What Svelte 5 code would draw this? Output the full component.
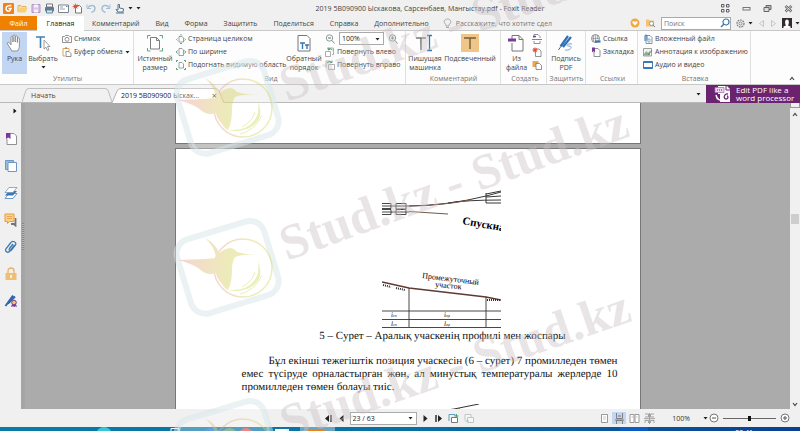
<script>
	const icons = {
		app: [11, 11, '<rect width="11" height="11" rx="1" fill="#f08019"/><path d="M8.5 2.5C5 2 3 3.500 3 5.500s1.500 3 3.500 2.500L8 5.500H5.500" fill="none" stroke="#fff" stroke-width="1.500"/>'],
		open: [11, 11, '<path d="M1 9V2.500h3l1 1h4V5" fill="#f7dc9a" stroke="#e3b55a"/><path d="M1 9.500l2-4.500h7.500l-2 4.500z" fill="#f6cf78"/>'],
		save: [10, 11, '<path d="M1 1.500h8v8H1z" fill="#d9c4e4" stroke="#b393c4"/><path d="M3 1.500h4v3H3zM3 6.500h4v3H3z" fill="#f6eef9"/>'],
		print: [11, 11, '<path d="M2.500 1h6v3h-6z" fill="#fff" stroke="#6b7680"/><rect x="1" y="4" width="9" height="4.500" rx="1" fill="#6b7680"/><path d="M2.500 7h6v3h-6z" fill="#d5e6f2" stroke="#5e88a6"/>'],
		mail: [11, 11, '<path d="M.5 2h10v7.500H.5z" fill="#fff" stroke="#7c848b"/><path d="M2 4h3M2 6h5" stroke="#91a4b4"/><path d="M8 3.500h1.500" stroke="#5e88a6"/>'],
		create: [11, 11, '<path d="M3.500 2.500h4l2 2v5.500h-6z" fill="#fff" stroke="#777"/><circle cx="3.500" cy="3.500" r="2" fill="#e4553a"/><path d="M3.500.5v6M.5 3.500h6M1.500 1.500l4 4M5.500 1.500l-4 4" stroke="#e4553a" stroke-width=".7"/>'],
		undo: [11, 11, '<path d="M2 4.500C4 1.500 9 2 9 5.500 9 8 7 9 5.500 9.500" fill="none" stroke="#a5bed8" stroke-width="1.400"/><path d="M1 1.500v4h4" fill="none" stroke="#a5bed8"/>'],
		redo: [11, 11, '<path d="M9 4.500C7 1.500 2 2 2 5.500 2 8 4 9 5.500 9.500" fill="none" stroke="#a5bed8" stroke-width="1.400"/><path d="M10 1.500v4H6" fill="none" stroke="#a5bed8"/>'],
		touch: [11, 11, '<path d="M4 7V1.500h1.500V5l4 .8-.5 3.200H4L2 6.500z" fill="#f2f8fc" stroke="#53748f"/><path d="M2 10h8" stroke="#53748f"/>'],
		grid: [9, 9, '<path d="M.5.5h2.500v2.500H.5zM5.500.5H8v2.500H5.500zM.5 5.500h2.500V8H.5zM5.500 5.500H8V8H5.500z" fill="none" stroke="#5c5c66"/>'],
		min: [9, 9, '<rect x="1" y="3.500" width="7" height="2.500" fill="none" stroke="#777"/>'],
		restore: [9, 9, '<path d="M3 1.500h5v4H3z" fill="#bbb" stroke="#666"/><path d="M1 3.500h5v4H1z" fill="#ddd" stroke="#666"/>'],
		shut: [9, 9, '<path d="M1.500 2l6 5.500M7.500 2l-6 5.500" stroke="#666" stroke-width="2.400"/><path d="M1.500 2l6 5.500M7.500 2l-6 5.500" stroke="#eee" stroke-width=".9"/>'],
		bulb: [9, 11, '<path d="M3 8V6.500C-.5 4.500 1.500 1 4.500 1s5 3.500 1.500 5.500V8zM3 9.500h3" fill="none" stroke="#999" stroke-width=".8"/>'],
		heart: [10, 10, '<circle cx="5" cy="5" r="4.500" fill="#f3a83c"/><path d="M5 7.500L2.500 5C2 3 4 2.500 5 4c1-1.500 3-1 2.500 1z" fill="#fff"/>'],
		finder: [11, 10, '<path d="M1 8.500v-7h3l1 1h4v6z" fill="#f5c274"/><circle cx="6.500" cy="5.500" r="2" fill="#fff" stroke="#888" stroke-width=".8"/><path d="M8 7l2 2" stroke="#888"/>'],
		lens: [10, 10, '<circle cx="6" cy="4" r="3" fill="none" stroke="#3d78ae" stroke-width="1.200"/><path d="M4 6L1 9" stroke="#3d78ae" stroke-width="1.500"/>'],
		gear: [9, 9, '<circle cx="4.500" cy="4.500" r="3.500" fill="none" stroke="#777" stroke-dasharray="1.800 .8" stroke-width="1.200"/><circle cx="4.500" cy="4.500" r="1.500" fill="none" stroke="#777" stroke-width=".8"/>'],
		prev: [7, 9, '<path d="M5.500 1.500v6L1.500 4.500z" fill="none" stroke="#bbb" stroke-width=".8"/>'],
		next: [7, 9, '<path d="M1.500 1.500v6l4-3z" fill="none" stroke="#bbb" stroke-width=".8"/>'],
		user: [10, 10, '<rect width="10" height="10" fill="#332c2c"/><path d="M1.500 10V8.500L4 7.500C2.500 5 3 1.500 5 1.500S7.500 5 6 7.500l2.500 1V10z" fill="#fff"/>'],
		down: [5, 4, '<path d="M.5 1h4L2.500 3.500z" fill="#222"/>'],
		hand: [18, 18, '<path d="M6 17L1.500 10c-.8-1.500 1-2.500 2-1l1.500 2V3.500c0-1.800 2-1.800 2 0V8 2.200c0-1.600 2.200-1.600 2.200 0V8 3c0-1.600 2.200-1.600 2.200 0v5.500V5c0-1.500 2-1.500 2 0v7c0 2-1 3.500-2 5z" fill="#fff" stroke="#888" stroke-width=".9"/>'],
		pick: [18, 18, '<path d="M2 3h9M6.500 3v11" stroke="#3d7fb5" stroke-width="1.600"/><path d="M10 6v9l2-1.800 1.500 3.300 1.500-.7-1.500-3.300H16z" fill="#fff" stroke="#888" stroke-width=".8"/>'],
		actual: [18, 18, '<path d="M4.500 3.500h6l3 3v8.500h-9z" fill="#fff" stroke="#7d7d7d"/><path d="M10.500 3.500v3h3" fill="none" stroke="#7d7d7d"/><path d="M1.500 4.500v-3h3M13.500 1.500h3v3M16.500 14v3h-3M4.500 17h-3v-3" fill="none" stroke="#61a583"/>'],
		flow: [18, 18, '<path d="M3 1.500h9l3 3V17H3z" fill="#fff" stroke="#777"/><path d="M5 9h5M7.500 9v6M10 11h4M12 11v4" stroke="#3975ae" stroke-width="1.400"/>'],
		type: [18, 18, '<path d="M0 4h10M5 4v12" stroke="#777" stroke-width="1.600"/><path d="M13.500 2v14M11 1.500h5M11 16.500h5" stroke="#3678b2" stroke-width="1.300"/>'],
		mark: [18, 18, '<rect width="18" height="18" fill="#efc688"/><path d="M3 4h12M9 4V15" stroke="#745f3e" stroke-width="1.400"/>'],
		file: [18, 18, '<path d="M4 5V1.500h7l4 4V17H4V9" fill="#fff" stroke="#777"/><path d="M11 1.500v4h4" fill="none" stroke="#777"/><path d="M0 6h8" stroke="#7a3b98" stroke-width="3"/>'],
		sign: [18, 18, '<path d="M11 2L3.500 12.500M14 3L6 13" stroke="#2f70b6" stroke-width="2.200"/><path d="M1.500 16l2-3" stroke="#2f70b6"/><path d="M8 16c6 1 8-4 4-4s-1-3 3-2" fill="none" stroke="#71a5d5"/>'],
		camera: [10, 10, '<path d="M.5 2.500h2l1-1h3l1 1h2v6h-9z" fill="#fff" stroke="#777" stroke-width=".8"/><circle cx="5" cy="5.300" r="2" fill="none" stroke="#777" stroke-width=".8"/>'],
		paste: [10, 10, '<path d="M3 9H1V1.500h6V4" fill="none" stroke="#dfa75a"/><path d="M4 4.500h3l2 2V9.500H4z" fill="#fff" stroke="#777" stroke-width=".8"/><path d="M3 1h2" stroke="#777"/>'],
		whole: [10, 10, '<path d="M3 2.500h3l1.500 1.500v4H3z" fill="#fff" stroke="#888" stroke-width=".8"/><path d="M4 1.500L5 .5l1 1M4 9l1 1 1-1M1.500 4.500L.5 5.500l1 1M8.500 4.500l1 1-1 1" fill="none" stroke="#4aa077" stroke-width=".9"/>'],
		wide: [10, 10, '<path d="M3 1.500h3l1.500 1.500v5.500H3z" fill="#fff" stroke="#888" stroke-width=".8"/><path d="M1.500 3.500L.3 5l1.200 1.500M8.500 3.500L9.700 5 8.500 6.500" fill="none" stroke="#4aa077"/>'],
		visible: [10, 10, '<path d="M3 2.500h3l1.500 1.500v4H3z" fill="#fff" stroke="#888" stroke-width=".8"/><path d="M.5 2V.5H2M8 .5h1.500V2M9.500 8v1.500H8M2 9.500H.5V8" fill="none" stroke="#4aa077"/>'],
		zoomout: [10, 10, '<circle cx="4.500" cy="4" r="3.200" fill="none" stroke="#888" stroke-width=".9"/><path d="M3 4h3" stroke="#4aa077" stroke-width="1.200"/><path d="M7 6.500l2.500 3" stroke="#888"/>'],
		zoomin: [10, 10, '<circle cx="4.500" cy="4" r="3.200" fill="none" stroke="#888" stroke-width=".9"/><path d="M3 4h3M4.500 2.500v3" stroke="#4aa077" stroke-width="1.200"/><path d="M7 6.500l2.500 3" stroke="#888"/>'],
		left: [10, 10, '<path d="M3.500 3.500V1h5v6.500H7" fill="none" stroke="#999" stroke-width=".8"/><path d="M.5 4.500h5v5h-5z" fill="#fff" stroke="#999" stroke-width=".8"/><path d="M7.500 3L5 1.500 3 2.500M3 .5v2h2" fill="none" stroke="#4aa077"/>'],
		right: [10, 10, '<path d="M1 7.500V1h4v2" fill="none" stroke="#999" stroke-width=".8"/><path d="M3.500 4.500h6v5h-6z" fill="#fff" stroke="#999" stroke-width=".8"/><path d="M2 3l2.500-1.500L7 2.500M7 .5v2H5" fill="none" stroke="#4aa077"/>'],
		scan: [10, 10, '<path d="M2 4V.5h4l2 2V4M2 7v2.500h6V7" fill="none" stroke="#777" stroke-width=".8"/><path d="M0 5.500h10" stroke="#4f8fc4"/><path d="M1 2.500h3" stroke="#7a3b98" stroke-width="1.400"/>'],
		blank: [10, 10, '<path d="M3.500 2h3.500L9 4v5.500H3.500z" fill="#fff" stroke="#777" stroke-width=".8"/><circle cx="3" cy="3" r="1.800" fill="#e4553a"/><path d="M3 .3v5.400M.3 3h5.400M1 1l4 4M5 1L1 5" stroke="#e4553a" stroke-width=".7"/>'],
		clip: [10, 10, '<path d="M.5 1h6v6h-6z" fill="#e9a750"/><path d="M4 3.500h3.500l2 2v4H4z" fill="#fff" stroke="#777" stroke-width=".8"/>'],
		link: [10, 10, '<circle cx="4.500" cy="4.500" r="4" fill="#eee" stroke="#777" stroke-width=".8"/><path d="M.5 4.500h8M4.500.5v8M2.500 1v7M6.500 1v4" stroke="#888" stroke-width=".6"/><path d="M4 7.500h5.500" stroke="#3675b5" stroke-width="2.200"/>'],
		bookmark: [10, 10, '<path d="M3 1.500h4l2 2v6H3z" fill="#fff" stroke="#777" stroke-width=".8"/><path d="M1 .5h3v5L2.500 4 1 5.500z" fill="#7a3b98"/>'],
		attach: [10, 10, '<path d="M3 1.500h4l2 2v6H3z" fill="#fff" stroke="#777" stroke-width=".8"/><path d="M2 7V2c0-1.500 2-1.500 2 0v4.500" fill="none" stroke="#3678b2"/><path d="M5 5h2v3H5z" fill="none" stroke="#66a3d1" stroke-width=".8"/>'],
		picture: [10, 10, '<path d="M.5 1.500h8V9h-8z" fill="#eef5ef" stroke="#888" stroke-width=".8"/><path d="M1 7l2.500-3L5 6l2-2v4.500H1z" fill="#8aac90"/><path d="M5 8l4-5" stroke="#777"/>'],
		video: [10, 10, '<path d="M.5 1.500h9v7h-9z" fill="#fff" stroke="#3d79b4"/><path d="M.5 2.300h9M.5 7.700h9" stroke="#3d79b4" stroke-width="1.600"/>'],
		sideMark: [14, 14, '<path d="M4 1.500h6l2.500 2.500v8.500H3V7" fill="#fff" stroke="#777" stroke-width=".8"/><path d="M2 1h4.500v6L4.300 5.500 2 7z" fill="#7a3b98"/>'],
		sidePages: [14, 14, '<path d="M1.500 1.500h8v9h-8z" fill="#9dbcd9" stroke="#6d98c3"/><path d="M4 3.500h8.500v9H4z" fill="#fff" stroke="#6d98c3"/>'],
		sideLayers: [14, 14, '<path d="M5 7.500h8L9 12.500H1z" fill="#fff" stroke="#4e82b5" stroke-width=".8"/><path d="M5 5h8L9 9.500H1z" fill="#3779b5"/><path d="M5 1.500h8L9 6.500H1z" fill="#fff" stroke="#7397b8" stroke-width=".8"/>'],
		sideNotes: [14, 14, '<path d="M11.500 5v6H7M9 10.500l2.500 2V9" fill="none" stroke="#777" stroke-width="1.800"/><path d="M1 1h9v7.500H5.500l-2 2v-2H1z" fill="#fad08f" stroke="#eb9c3b"/><path d="M3 3.500h5M3 5.500h5" stroke="#eb9c3b" stroke-width=".8"/>'],
		sideClip: [14, 14, '<path d="M10.500 5L6 11c-2 2.500-5.500.5-4-2.200L6.500 3C8.500 0 13 2 11.500 5L7.500 10c-1.500 1.500-3 0-2-1.500L9 4" fill="none" stroke="#3c7ab5" stroke-width="1.300"/>'],
		sideLock: [14, 14, '<path d="M4 6V4c0-4 6-4 6 0v2" fill="none" stroke="#e9b163" stroke-width="1.300"/><path d="M1.500 6h11v7h-11z" fill="#f1bd73"/><path d="M7 8v3" stroke="#fff" stroke-width="1.600"/>'],
		sideSign: [14, 14, '<path d="M9 1.500L1.500 12M11 2.500L4 9.500" stroke="#2c69af" stroke-width="2"/><path d="M8.500 9l-1.500 4 2-.8 1.500.8 1-.8 1.500.8L11.500 9z" fill="#7a3b98"/><circle cx="10" cy="8.500" r="2.300" fill="#f3c36e" stroke="#7a3b98"/>'],
		first: [9, 9, '<path d="M5 1v7L1 4.500z" fill="#222"/><path d="M7 1v7" stroke="#222" stroke-width="1.400"/>'],
		back: [7, 9, '<path d="M5.500 1v7L1.500 4.500z" fill="#222"/>'],
		forward: [7, 9, '<path d="M1.500 1v7l4-3.500z" fill="#222"/>'],
		last: [9, 9, '<path d="M2 1v7" stroke="#222" stroke-width="1.400"/><path d="M4 1v7l4-3.500z" fill="#222"/>'],
		viewAdd: [11, 11, '<path d="M1 8V1.500h6V3" fill="none" stroke="#5f9fc1"/><path d="M3.500 4.500h6v5h-6z" fill="#fff" stroke="#777"/><path d="M8.500 1v4M6.500 3h4" stroke="#4aa077"/>'],
		viewBack: [11, 11, '<path d="M1 7V1.500h6V4M3.500 4.500h6v5h-6z" fill="#f6f6f6" stroke="#bcc6cc"/><path d="M1 8h4" stroke="#9fcfb6"/>'],
		single: [11, 11, '<path d="M2.500 1.500h6v8h-6z" fill="#fff" stroke="#999"/><path d="M4 4h3M4 6h3" stroke="#bbb" stroke-width=".8"/>'],
		scroll: [11, 11, '<path d="M2.500 0v5.500h6V0M2.500 11V7.500h6V11M1 7h9" fill="none" stroke="#777" stroke-width=".9"/><path d="M4 3h3" stroke="#777"/>'],
		facing: [11, 11, '<path d="M1 1.500h4v8H1zM6 1.500h4v8H6z" fill="#fff" stroke="#999"/><path d="M2.500 4H4M7 4h1.500" stroke="#bbb"/>'],
		facingScroll: [11, 11, '<path d="M1 1h3.500v3H1M10 1H6.500v3H10M1 10V7.500h3.500V10M10 10V7.500H6.500V10M0 5.700h11M5.500 0v11" fill="none" stroke="#999" stroke-width=".9"/>'],
		minus: [10, 10, '<circle cx="5" cy="5" r="4" fill="#fff" stroke="#666" stroke-width=".9"/><path d="M3 5h4" stroke="#555"/>'],
		plus: [10, 10, '<circle cx="5" cy="5" r="4" fill="#fff" stroke="#666" stroke-width=".9"/><path d="M3 5h4M5 3v4" stroke="#555"/>'],
		upArrow: [6, 5, '<path d="M1 4l2-2.500L5 4" fill="none" stroke="#444" stroke-width="1.200"/>'],
		downArrow: [6, 5, '<path d="M1 1l2 2.500L5 1" fill="none" stroke="#444" stroke-width="1.200"/>'],
		expand: [4, 6, '<path d="M.5.5v5l3-2.500z" fill="#111"/>'],
		promo: [18, 18, '<path d="M4 1h9l3 3v13H6V9H4z" fill="#fff"/><path d="M12 1v4h4" fill="none" stroke="#6b2370"/><path d="M1 2.500h9v5H1z" fill="#ead7ee" stroke="#a873b0" stroke-width=".8"/><path d="M3 5h5" stroke="#6b2370" stroke-dasharray="1 1"/><path d="M2 10c1 5 4 6 7 4" fill="none" stroke="#fff" stroke-width="1.500"/><path d="M14 9c-4-1-5 5-2 5s2-3 1-3" fill="none" stroke="#6b2370" stroke-width="1.300"/>']
	};

	const quick = [
		['app', 'Foxit Reader'],
		['open', 'Открыть'],
		['save', 'Сохранить'],
		['print', 'Печать'],
		['mail', 'Эл. почта'],
		['create', 'Создать'],
		['undo', 'Отменить'],
		['redo', 'Вернуть'],
		['touch', 'Сенсорный режим']
	];

	const menu = ['Комментарий', 'Вид', 'Форма', 'Защитить', 'Поделиться', 'Справка', 'Дополнительно'];

	const side = [
		['sideMark', 'Закладки'],
		['sidePages', 'Страницы'],
		['sideLayers', 'Слои'],
		['sideNotes', 'Комментарии'],
		['sideClip', 'Вложения'],
		['sideLock', 'Защита'],
		['sideSign', 'Подписи']
	];

	const views = ['single', 'scroll', 'facing', 'facingScroll'];

	// vertical shift of each watermark logo
	const logos = [-160, 0, 180];

	let view = $state('scroll');
	let zoom = $state(50);
</script>

{#snippet icon(name)}
	<svg
		class="icon"
		width={icons[name][0]}
		height={icons[name][1]}
		viewBox="0 0 {icons[name][0]} {icons[name][1]}"
		aria-hidden="true"
	>
		{@html icons[name][2]}
	</svg>
{/snippet}

{#snippet tool(name, label)}
	<button class="tool" aria-label={label}>{@render icon(name)}</button>
{/snippet}

{#snippet small(name, label)}
	<button class="small">{@render icon(name)}<span>{label}</span></button>
{/snippet}

{#snippet big(name, first, second, cls)}
	<button class="big {cls}">
		{@render icon(name)}
		<span>{first}{#if second}<br />{second}{/if}</span>
		{#if name === 'pick'}{@render icon('down')}{/if}
	</button>
{/snippet}

<div class="app">
	<header class="title-bar">
		<div class="quick">
			{#each quick as [name, label]}
				{@render tool(name, label)}
			{/each}
			{@render icon('down')}
			{@render icon('down')}
		</div>
		<div class="title">2019 5B090900 Ыскакова, Сарсенбаев, Мангыстау.pdf - Foxit Reader</div>
		<div class="window-buttons">
			{@render tool('grid', 'Вид ленты')}
			{@render tool('min', 'Свернуть')}
			{@render tool('restore', 'Восстановить')}
			{@render tool('shut', 'Закрыть')}
		</div>
	</header>

	<nav class="menu">
		<button class="menu__item menu__item--file">Файл</button>
		<button class="menu__item menu__item--active">Главная</button>
		{#each menu as item}
			<button class="menu__item">{item}</button>
		{/each}
		<div class="ask">{@render icon('bulb')}<span>Расскажите, что хотите сдел</span></div>
		<div class="menu__right">
			{@render tool('heart', 'Избранное')}
			{@render tool('finder', 'Поиск в папке')}
			<div class="search">
				<input type="text" placeholder="Поиск" aria-label="Поиск" />
				{@render icon('lens')}
			</div>
			<button class="tool tool--drop" aria-label="Настройки">{@render icon('gear')}{@render icon('down')}</button>
			{@render tool('prev', 'Назад')}
			{@render tool('next', 'Вперед')}
			<button class="tool tool--drop" aria-label="Профиль">{@render icon('user')}{@render icon('down')}</button>
		</div>
	</nav>

	<div class="ribbon">
		<section class="group group--tools">
			<div class="group__body">
				{@render big('hand', 'Рука', '', 'big--active')}
				{@render big('pick', 'Выбрать', '', 'big--mid')}
				<div class="stack">
					{@render small('camera', 'Снимок')}
					<button class="small">{@render icon('paste')}<span>Буфер обмена</span>{@render icon('down')}</button>
				</div>
			</div>
			<h2>Утилиты</h2>
		</section>
		<section class="group group--view">
			<div class="group__body">
				{@render big('actual', 'Истинный', 'размер', 'big--wide')}
				<div class="stack stack--fit">
					{@render small('whole', 'Страница целиком')}
					{@render small('wide', 'По ширине')}
					{@render small('visible', 'Подогнать видимую область')}
				</div>
				{@render big('flow', 'Обратный', 'порядок', 'big--wide')}
				<div class="stack">
					<div class="zoom-row">
						{@render tool('zoomout', 'Уменьшить')}
						<div class="select">
							<select aria-label="Масштаб"><option>100%</option></select>
							{@render icon('down')}
						</div>
						{@render tool('zoomin', 'Увеличить')}
					</div>
					{@render small('left', 'Повернуть влево')}
					{@render small('right', 'Повернуть вправо')}
				</div>
			</div>
			<h2>Вид</h2>
		</section>
		<section class="group group--comment">
			<div class="group__body">
				{@render big('type', 'Пишущая', 'машинка', 'big--wide')}
				{@render big('mark', 'Подсвеченный', '', 'big--max')}
			</div>
			<h2>Комментарий</h2>
		</section>
		<section class="group group--create">
			<div class="group__body">
				{@render big('file', 'Из', 'файла', '')}
				<div class="stack">
					<button class="small" aria-label="Со сканера">{@render icon('scan')}</button>
					<button class="small" aria-label="Пустой">{@render icon('blank')}</button>
					<button class="small" aria-label="Из буфера обмена">{@render icon('clip')}</button>
				</div>
			</div>
			<h2>Создать</h2>
		</section>
		<section class="group group--protect">
			<div class="group__body">{@render big('sign', 'Подпись', 'PDF', 'big--wide')}</div>
			<h2>Защитить</h2>
		</section>
		<section class="group group--links">
			<div class="group__body">
				<div class="stack">
					{@render small('link', 'Ссылка')}
					{@render small('bookmark', 'Закладка')}
				</div>
			</div>
			<h2>Ссылки</h2>
		</section>
		<section class="group group--insert">
			<div class="group__body">
				<div class="stack">
					{@render small('attach', 'Вложенный файл')}
					{@render small('picture', 'Аннотация к изображению')}
					{@render small('video', 'Аудио и видео')}
				</div>
			</div>
			<h2>Вставка</h2>
		</section>
		<button class="tool collapse" aria-label="Свернуть ленту">{@render icon('upArrow')}</button>
	</div>

	<div class="tabs">
		<div class="tab">
			<svg class="tab__shape" viewBox="0 0 118 15" preserveAspectRatio="none" aria-hidden="true">
				<path d="M0 15L5 3Q6 .5 9 .5H109Q112 .5 113 3L118 15" fill="#f1f1f1" stroke="#b5b5b5" />
			</svg>
			<button class="tab__name">Начать</button>
		</div>
		<div class="tab tab--active">
			<svg class="tab__shape" viewBox="0 0 112 15" preserveAspectRatio="none" aria-hidden="true">
				<path d="M0 15L5 3Q6 .5 9 .5H103Q106 .5 107 3L112 15" fill="#fff" stroke="#b5b5b5" />
			</svg>
			<button class="tab__name">2019 5B090900 Ыскак...</button>
			<button class="tab__close" aria-label="Закрыть вкладку">×</button>
		</div>
		<button class="tool tabs__more" aria-label="Все вкладки">{@render icon('down')}</button>
		<button class="promo">{@render icon('promo')}<span>Edit PDF like a<br />word processor</span></button>
	</div>

	<div class="workspace">
		<aside class="side">
			<button class="tool side__expand" aria-label="Развернуть панель">{@render icon('expand')}</button>
			{#each side as [name, label]}
				{@render tool(name, label)}
			{/each}
		</aside>
		<div class="grip"><i></i></div>
		<main class="canvas">
			<div class="page page--previous"></div>
			<article class="page">
				<svg class="figure" width="119" height="140" viewBox="0 0 119 140" role="img" aria-label="План и профиль участка">
					<g fill="none" stroke="#333" stroke-width=".9">
						<path d="M0 13.500h9v5H0M0 16h27M14 13.500h10v5.500H14zM0 19.500h9v5H0M0 22h27M14 19.500h10v5H14z" />
						<path d="M27 16Q66 15.500 104 6L119 2M66 13Q84 10 119 10M104 4l15-3M104 7l15-1M104 13h15M104 3v10" stroke="#222" />
						<path d="M27 16Q60 15.500 88 10M27 21.500L66 24" stroke="#76574a" stroke-width="1.200" />
						<path d="M0 92L27 98 104 107 119 110" stroke="#603a30" stroke-width="1.500" />
						<path d="M1 95l8 2M14 98l9 2M105 110h14" stroke-dasharray="1 1" stroke-width="2" />
						<path d="M27 98v39M104 107v30M0 121h119M0 129.500h119M0 137.500h119" />
					</g>
					<text class="figure__big" transform="translate(80 34) rotate(10)">Спускна</text>
					<text class="figure__label" transform="translate(40 88) rotate(7)">Промежуточный</text>
					<text class="figure__label" transform="translate(53 97) rotate(5)">участок</text>
					<g class="figure__small">
						<text x="9" y="127">i<tspan font-size="4">сп</tspan></text>
						<text x="62" y="127">i<tspan font-size="4">пр</tspan></text>
						<text x="9" y="136">l<tspan font-size="4">сп</tspan></text>
						<text x="62" y="136">l<tspan font-size="4">пр</tspan></text>
					</g>
				</svg>
				<p class="caption">5 – Сурет – Аралық учаскенің профилі мен жоспары</p>
				<p class="text">
					<span>Бұл екінші тежегіштік позиция учаскесін (6 – сурет) 7 промилледен төмен</span>
					<span>емес түсіруде орналастырған жөн, ал минустық температуралы жерлерде 10</span>
					<span>промилледен төмен болауы тиіс.</span>
				</p>
				<svg class="next-figure" width="40" height="8" viewBox="0 0 40 8" aria-hidden="true">
					<path d="M0 7L14 5 39 0M14 6l6-1" fill="none" stroke="#333" />
				</svg>
			</article>
		</main>
		<div class="scrollbar">
			<div class="scrollbar__split"></div>
			<button class="tool" aria-label="Вверх">{@render icon('upArrow')}</button>
			<div class="scrollbar__track"><div class="scrollbar__thumb"></div></div>
			<button class="tool" aria-label="Вниз">{@render icon('downArrow')}</button>
		</div>
	</div>

	<footer class="status">
		<div class="status__side"></div>
		<div class="pager">
			{@render tool('first', 'Первая страница')}
			{@render tool('back', 'Предыдущая страница')}
			<div class="select select--page">
				<select aria-label="Страница"><option>23 / 63</option></select>
				{@render icon('down')}
			</div>
			{@render tool('forward', 'Следующая страница')}
			{@render tool('last', 'Последняя страница')}
			{@render tool('viewAdd', 'Следующий вид')}
			{@render tool('viewBack', 'Предыдущий вид')}
		</div>
		<div class="status__side status__side--right">
			<div class="views">
				{#each views as name}
					<button
						class="tool view"
						class:view--active={view === name}
						aria-label={name}
						onclick={() => (view = name)}>{@render icon(name)}</button
					>
				{/each}
			</div>
			<button class="percent">100%{@render icon('down')}</button>
			<div class="zoom">
				{@render tool('minus', 'Мельче')}
				<input type="range" min="0" max="100" bind:value={zoom} aria-label="Масштаб страницы" />
				{@render tool('plus', 'Крупнее')}
			</div>
		</div>
	</footer>

	<div class="taskbar">
		<svg width="340" height="4" viewBox="0 0 340 4" aria-hidden="true">
			<rect x="300" width="35" height="4" fill="#6da5c1" />
			<circle cx="104" cy="8" r="8" fill="#35c5d6" />
			<path d="M171 4V1.500h8V4" fill="none" stroke="#fff" />
			<circle cx="211" cy="8" r="7" fill="#1d79d4" />
			<circle cx="246" cy="8" r="7" fill="#e4524a" />
			<path d="M275 2h14v2h-14z" fill="#fff" />
			<path d="M308 2h12l6 2h-18z" fill="#f08019" />
		</svg>
		<i class="taskbar__light"></i>
		<span class="clock">22:41</span>
	</div>

	<svg class="watermark" aria-hidden="true">
		<defs>
			<linearGradient id="bird" x1="0" x2="1" y1="0" y2="0">
				<stop offset="0" stop-color="#eda0a0" />
				<stop offset=".6" stop-color="#d9d268" />
				<stop offset="1" stop-color="#d4dc60" />
			</linearGradient>
		</defs>
		{#each logos as shift}
			<g transform="translate(0 {shift})">
				<rect class="logo-fill" x="182" y="229" width="91" height="77" rx="15" transform="rotate(-17 227 267)" />
				<rect class="logo-frame" x="182" y="229" width="91" height="77" rx="15" transform="rotate(-17 227 267)" />
				<g opacity=".45">
					<circle cx="243" cy="268" r="29" fill="none" stroke="url(#bird)" stroke-width="1.500" />
					<path
						d="M178 260L205 259 216 258Q215 247 205 238 217 245 219 253 224 249 229 248 234 248 237 252 247 255 258 255 242 254 235 257 232 261 232 270 232 282 228 290 224 288 222 284 216 277 216 273 208 276 202 271 194 264 178 260Z"
						fill="url(#bird)"
					/>
					<path d="M258 261Q265 279 251 287 240 293 228 290 247 291 254 281 260 274 258 261Z" fill="#d4dc60" />
					<path d="M262 275Q256 290 240 294M255 272Q252 282 242 287" fill="none" stroke="#d4dc60" />
				</g>
			</g>
		{/each}
		<text transform="translate(287 102) rotate(-20)">Stud.kz - Stud.kz</text>
		<text transform="translate(287 261) rotate(-20)">Stud.kz - Stud.kz</text>
		<text transform="translate(287 440) rotate(-19)">Stud.kz - Stud.kz</text>
	</svg>
</div>

<style>
	:global(body) {
		margin: 0;
	}

	.app {
		position: relative;
		display: flex;
		flex-direction: column;
		height: 100vh;
		overflow: hidden;
		background: #f0f0f0;
		color: #444;
		font-family: 'Open Sans', 'Noto Sans', sans-serif;
		font-size: 7px;
		line-height: 9px;
	}

	button,
	input,
	select {
		margin: 0;
		padding: 0;
		border: 0;
		background: none;
		color: inherit;
		font: inherit;
	}

	button {
		white-space: nowrap;
	}

	h2,
	p {
		margin: 0;
	}

	.icon {
		display: block;
		flex: none;
	}

	.tool {
		display: flex;
		align-items: center;
		justify-content: center;
	}

	.tool--drop {
		gap: 3px;
	}

	.title-bar {
		display: grid;
		grid-template-columns: 1fr auto 1fr;
		align-items: center;
		height: 16px;
		padding: 0 7px 0 3px;
	}

	.quick {
		display: flex;
		align-items: center;
		gap: 3px;
	}

	.title {
		padding-left: 64px;
	}

	.window-buttons {
		display: flex;
		justify-content: flex-end;
		gap: 12px;
	}

	.menu {
		display: flex;
		align-items: stretch;
		height: 15px;
		border-bottom: 1px solid #c8c8c8;
		box-sizing: border-box;
	}

	.menu__item {
		padding: 0 8px;
	}

	.menu__item--file {
		width: 37px;
		background: #f08000;
		color: #fff;
	}

	.menu__item--active {
		width: 47px;
		margin-bottom: -1px;
		padding: 0;
		background: #fff;
		color: #222;
	}

	.ask {
		display: flex;
		align-items: center;
		gap: 4px;
		margin-left: 6px;
		color: #777;
		white-space: nowrap;
	}

	.menu__right {
		display: flex;
		align-items: center;
		gap: 5px;
		margin-left: auto;
	}

	.search {
		display: flex;
		align-items: center;
		width: 70px;
		height: 13px;
		box-sizing: border-box;
		border: 1px solid #aaa;
		background: #fff;
	}

	.search input {
		flex: 1;
		min-width: 0;
		padding-left: 2px;
	}

	.search input::placeholder {
		color: #777;
	}

	.ribbon {
		display: flex;
		height: 54px;
		box-sizing: border-box;
		border-bottom: 1px solid #c8c8c8;
		background: #fdfdfd;
	}

	.group {
		display: flex;
		flex: none;
		flex-direction: column;
		box-sizing: border-box;
		padding-top: 1px;
		border-right: 1px solid #e0e0e0;
	}

	.group--tools {
		width: 134px;
		padding-left: 2px;
	}

	.group--view {
		width: 272px;
		padding-left: 3px;
	}

	.group--comment {
		width: 95px;
		padding-left: 1px;
	}

	.group--create {
		width: 46px;
		padding-left: 3px;
	}

	.group--protect {
		width: 39px;
		padding-left: 1px;
	}

	.group--links {
		width: 52px;
		padding-left: 2px;
	}

	.group--insert {
		width: 113px;
		padding-left: 2px;
	}

	.group__body {
		display: flex;
		height: 42px;
	}

	h2 {
		color: #777;
		font-size: 7px;
		font-weight: 400;
		text-align: center;
	}

	.big {
		display: flex;
		flex-direction: column;
		align-items: center;
		gap: 2px;
		width: 25px;
		padding-top: 2px;
	}

	.big--active {
		background: #c2d5f2;
	}

	.big--mid {
		width: 32px;
	}

	.big--wide {
		width: 36px;
	}

	.big--max {
		width: 54px;
	}

	.stack {
		display: flex;
		flex-direction: column;
		padding-left: 3px;
	}

	.stack--fit {
		width: 110px;
	}

	.small {
		display: flex;
		align-items: center;
		gap: 2px;
		height: 13px;
	}

	.zoom-row {
		display: flex;
		align-items: center;
		gap: 4px;
		height: 13px;
	}

	.select {
		display: flex;
		align-items: center;
		box-sizing: border-box;
		width: 45px;
		height: 13px;
		padding-right: 3px;
		border: 1px solid #aaa;
		background: #fff;
		color: #222;
	}

	.select--page {
		width: 67px;
	}

	select {
		flex: 1;
		appearance: none;
		padding-left: 2px;
	}

	.collapse {
		align-self: flex-end;
		margin: 0 5px 3px auto;
	}

	.tabs {
		display: flex;
		align-items: flex-end;
		height: 18px;
		padding-left: 22px;
		border-bottom: 1px solid #b8b8b8;
		box-sizing: border-box;
	}

	.tab {
		position: relative;
		display: flex;
		align-items: center;
		box-sizing: border-box;
		width: 90px;
		height: 14px;
		padding-left: 9px;
	}

	.tab--active {
		width: 112px;
		margin-bottom: -1px;
		height: 15px;
		color: #222;
	}

	.tab__shape {
		position: absolute;
		top: 0;
		left: 0;
		width: 100%;
		height: 100%;
	}

	.tab__name,
	.tab__close {
		position: relative;
	}

	.tab__close {
		margin-left: auto;
		padding-right: 7px;
		font-size: 9px;
	}

	.tabs__more {
		align-self: center;
		margin: 0 5px 0 auto;
	}

	.promo {
		display: flex;
		align-self: stretch;
		align-items: center;
		gap: 4px;
		width: 94px;
		margin-bottom: -1px;
		padding-left: 8px;
		background: #6b2370;
		color: #fff;
		font-size: 8px;
		line-height: 8px;
		text-align: left;
	}

	.workspace {
		display: flex;
		flex: 1;
		min-height: 0;
	}

	.side {
		display: flex;
		flex-direction: column;
		gap: 13px;
		width: 21px;
	}

	.side__expand {
		height: 16px;
		padding-left: 9px;
	}

	.grip {
		display: flex;
		align-items: center;
		width: 4px;
		background: #a5a5a5;
	}

	.grip i {
		width: 2px;
		height: 27px;
		margin: 0 0 40px 1px;
		background: repeating-linear-gradient(#888 0 1px, #b5b5b5 1px 2px);
	}

	.canvas {
		display: flex;
		flex: 1;
		flex-direction: column;
		align-items: center;
		gap: 4px;
		overflow: hidden;
		background: #ababab;
	}

	.page {
		display: flex;
		flex: 1 0 auto;
		flex-direction: column;
		box-sizing: border-box;
		width: 100%;
		max-width: 466px;
		padding: 41px 22px 0 66px;
		border: 1px solid #777;
		background: #fff;
		color: #111;
		font-family: 'Liberation Serif', serif;
		font-size: 11px;
		line-height: 13px;
		text-rendering: geometricPrecision;
	}

	.page--previous {
		flex: none;
		height: 41px;
		padding: 0;
		border-top: 0;
	}

	.figure {
		align-self: center;
		margin-left: 24px;
	}

	.figure__big {
		font-size: 11px;
		font-weight: 700;
	}

	.figure__label {
		font-size: 8px;
	}

	.figure__small {
		font-size: 7px;
		font-style: italic;
	}

	.caption {
		margin-left: 26px;
		text-align: center;
	}

	.text {
		margin-top: 12px;
		text-indent: 27px;
	}

	.text span {
		display: block;
		text-align-last: justify;
		white-space: nowrap;
	}

	.text span + span {
		text-indent: 0;
	}

	.text span:last-child {
		text-align-last: left;
	}

	.next-figure {
		margin: 10px 0 0 198px;
	}

	.scrollbar {
		display: flex;
		flex-direction: column;
		align-items: center;
		gap: 4px;
		width: 10px;
		padding-bottom: 2px;
	}

	.scrollbar__split {
		width: 8px;
		height: 4px;
		border: 1px solid #999;
		border-top: 0;
	}

	.scrollbar__track {
		display: flex;
		flex: 1;
		flex-direction: column;
		width: 8px;
	}

	.scrollbar__track::before {
		content: '';
		flex: 34;
	}

	.scrollbar__track::after {
		content: '';
		flex: 64;
	}

	.scrollbar__thumb {
		height: 10px;
		background: #cdcdcd;
	}

	.status {
		display: flex;
		align-items: center;
		height: 18px;
		padding-right: 10px;
		color: #333;
	}

	.status__side {
		flex: 1;
		display: flex;
	}

	.status__side--right {
		align-items: center;
		justify-content: flex-end;
		gap: 16px;
	}

	.pager {
		display: flex;
		align-items: center;
		gap: 5px;
		margin-left: 8px;
	}

	.views {
		display: flex;
		gap: 1px;
	}

	.view {
		width: 14px;
		height: 12px;
	}

	.view--active {
		background: #c2d5f2;
	}

	.percent {
		display: flex;
		align-items: center;
		gap: 13px;
		margin-right: -15px;
	}

	.zoom {
		display: flex;
		align-items: center;
		gap: 4px;
	}

	.zoom input {
		width: 53px;
		height: 10px;
		appearance: none;
		background: linear-gradient(#666, #666) center / 100% 1px no-repeat;
	}

	.zoom input::-webkit-slider-thumb {
		appearance: none;
		width: 3px;
		height: 5px;
		background: #111;
	}

	.taskbar {
		display: flex;
		height: 4px;
		overflow: hidden;
		background: linear-gradient(90deg, #0a7ba8, #0871a4 50%, #0b3f92);
	}

	.taskbar__light {
		width: 28px;
		margin-left: auto;
		background: #0b5cc0;
	}

	.clock {
		margin: 1px 47px 0 87px;
		color: #fff;
	}

	.watermark {
		position: absolute;
		inset: 0;
		width: 100%;
		height: 100%;
		pointer-events: none;
	}

	.watermark text {
		fill: #cbc2c4;
		fill-opacity: 0.42;
		font: 700 50px 'Liberation Serif', serif;
	}

	.logo-fill {
		fill: #fff;
		fill-opacity: 0.3;
	}

	.logo-frame {
		fill: none;
		stroke: #d5e6ea;
		stroke-opacity: 0.5;
		stroke-width: 6px;
	}
</style>
